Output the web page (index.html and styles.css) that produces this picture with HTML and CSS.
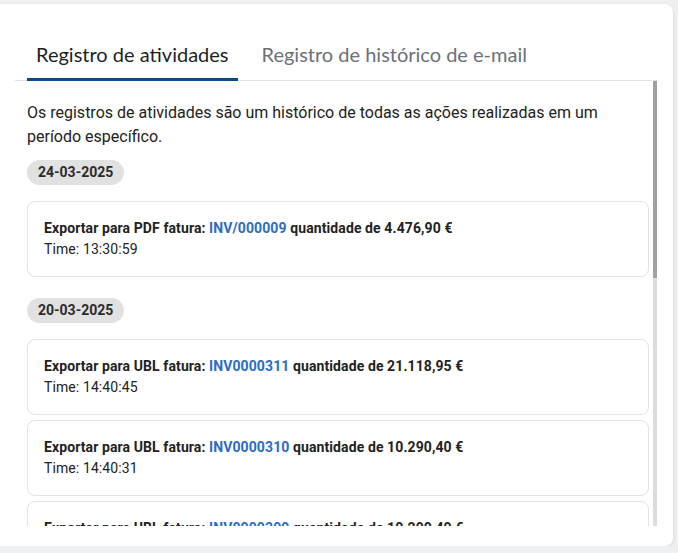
FILE: index.html
```html
<!DOCTYPE html>
<html lang="pt">
<head>
<meta charset="utf-8">
<title>Registro de atividades</title>
<link rel="stylesheet" href="styles.css">
</head>
<body>
<div class="panel">
  <div class="tabs">
    <div class="tab active">Registro de atividades</div>
    <div class="tab">Registro de histórico de e-mail</div>
  </div>
  <div class="body">
    <div class="log">
      <p class="intro">Os registros de atividades são um histórico de todas as ações realizadas em um período específico.</p>

      <div class="group">
        <span class="date">24-03-2025</span>
        <div class="entry">
          <div class="action">Exportar para PDF fatura: <a class="ref">INV/000009</a> quantidade de 4.476,90 €</div>
          <div class="time">Time: 13:30:59</div>
        </div>
      </div>

      <div class="group">
        <span class="date">20-03-2025</span>
        <div class="entry">
          <div class="action">Exportar para UBL fatura: <a class="ref">INV0000311</a> quantidade de 21.118,95 €</div>
          <div class="time">Time: 14:40:45</div>
        </div>
        <div class="entry">
          <div class="action">Exportar para UBL fatura: <a class="ref">INV0000310</a> quantidade de 10.290,40 €</div>
          <div class="time">Time: 14:40:31</div>
        </div>
        <div class="entry">
          <div class="action">Exportar para UBL fatura: <a class="ref">INV0000309</a> quantidade de 10.290,40 €</div>
          <div class="time">Time: 14:40:18</div>
        </div>
      </div>
    </div>
    <div class="scrollbar"><div class="thumb"></div></div>
  </div>
</div>
</body>
</html>
```

FILE: styles.css
```css
html, body {
  margin: 0;
  padding: 0;
}

body {
  background: #eef0f2;
  font-family: Roboto, "Liberation Sans", sans-serif;
  color: #222222;
}

.panel {
  margin-top: 4px;
  width: 673px;
  height: 542px;
  box-sizing: border-box;
  background: #ffffff;
  border-radius: 0 8px 8px 0;
  box-shadow: 0 1px 4px rgba(0, 0, 0, 0.12);
  padding: 36px 16px 20px 15px;
  display: flex;
  flex-direction: column;
}

.tabs {
  display: flex;
  gap: 15px;
  padding-left: 12px;
  border-bottom: 1px solid #dfe2e6;
  flex: none;
}

.tab {
  font-family: Lato, "Noto Sans", sans-serif;
  font-size: 20px;
  line-height: 28px;
  padding: 0 9px 10px;
  margin-bottom: -1px;
  border-bottom: 3px solid transparent;
  color: #6b7079;
}

.tab.active {
  color: #1c1f26;
  border-bottom-color: #0c4a87;
}

.body {
  flex: 1;
  min-height: 0;
  display: flex;
}

.log {
  flex: 1;
  min-width: 0;
  overflow: hidden;
  padding: 20px 4px 0 12px;
}

.scrollbar {
  flex: none;
  width: 4px;
  background: #dcdcdc;
}

.thumb {
  height: 197px;
  background: #a0a0a0;
}

.intro {
  margin: 0 0 11px;
  font-size: 16px;
  line-height: 24px;
  color: #222222;
}

.group {
  display: flex;
  flex-direction: column;
  align-items: flex-start;
  margin-bottom: 21px;
}

.date {
  display: inline-block;
  background: #e1e1e1;
  border-radius: 13px;
  padding: 3px 11px;
  font-size: 14px;
  line-height: 19px;
  font-weight: 700;
  color: #2b2b2b;
  margin-bottom: 16px;
}

.entry {
  align-self: stretch;
  border: 1px solid #e2e2e2;
  border-radius: 8px;
  padding: 16px;
  margin-bottom: 5px;
  font-size: 14px;
  line-height: 21px;
  letter-spacing: 0.1px;
}

.entry:last-child {
  margin-bottom: 0;
}

.action {
  font-weight: 700;
  color: #222222;
}

.ref {
  color: #2b6cc4;
  text-decoration: none;
}

.time {
  color: #222222;
}
```
